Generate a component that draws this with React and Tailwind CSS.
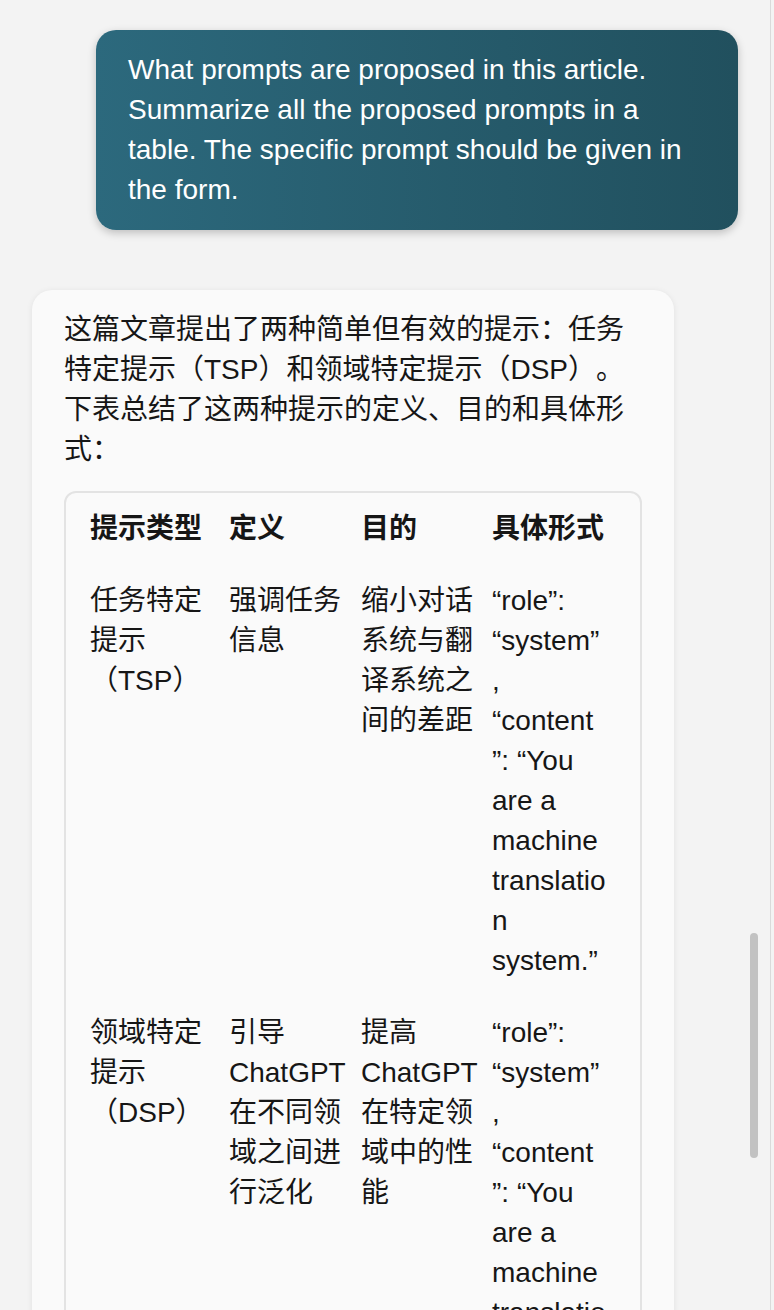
const rows = [
  {
    type: ["任务特定", "提示", "（TSP）"],
    def: ["强调任务", "信息"],
    goal: ["缩小对话", "系统与翻", "译系统之", "间的差距"],
    form: [
      "“role”:",
      "“system”",
      ",",
      "“content",
      "”: “You",
      "are a",
      "machine",
      "translatio",
      "n",
      "system.”",
    ],
  },
  {
    type: ["领域特定", "提示", "（DSP）"],
    def: ["引导", "ChatGPT", "在不同领", "域之间进", "行泛化"],
    goal: ["提高", "ChatGPT", "在特定领", "域中的性", "能"],
    form: [
      "“role”:",
      "“system”",
      ",",
      "“content",
      "”: “You",
      "are a",
      "machine",
      "translatio",
      "n",
      "system.”",
    ],
  },
];

function Lines({ lines }) {
  return lines.map((line, i) => (
    <div key={i} className="whitespace-nowrap">
      {line}
    </div>
  ));
}

export default function App() {
  return (
    <div className="relative h-[1310px] overflow-hidden bg-[#f3f3f3] font-['Liberation_Sans','Noto_Sans_CJK_SC',sans-serif] text-[28px] leading-[40px] [text-spacing-trim:space-all]">
      <div className="flex flex-col pt-[30px] pl-[32px] pr-[36px]">
        <div className="self-end w-[642px] rounded-[20px] bg-linear-to-r from-[#2c697d] to-[#21505e] px-8 py-5 text-white shadow-[0_3px_8px_rgba(0,0,0,0.22)]">
          What prompts are proposed in this article. Summarize all the proposed
          prompts in a table. The specific prompt should be given in the form.
        </div>

        <div className="mt-[60px] w-[642px] rounded-[20px] bg-[#fafafa] px-8 pt-5 pb-8 text-[#161616] shadow-[0_1px_6px_rgba(0,0,0,0.08)]">
          <p>
            这篇文章提出了两种简单但有效的提示：任务特定提示（TSP）和领域特定提示（DSP）。下表总结了这两种提示的定义、目的和具体形式：
          </p>

          <div className="mt-[21px] rounded-xl border-2 border-[#e3e3e3]">
            <table className="w-full table-fixed border-collapse text-left">
              <thead>
                <tr>
                  <th className="w-[139px] pl-6 py-4 align-top font-bold">
                    提示类型
                  </th>
                  <th className="w-[132px] pl-6 py-4 align-top font-bold">
                    定义
                  </th>
                  <th className="w-[131px] pl-6 py-4 align-top font-bold">
                    目的
                  </th>
                  <th className="pl-6 py-4 align-top font-bold">具体形式</th>
                </tr>
              </thead>
              <tbody>
                {rows.map((row, i) => (
                  <tr key={i}>
                    <td className="pl-6 py-4 align-top">
                      <Lines lines={row.type} />
                    </td>
                    <td className="pl-6 py-4 align-top">
                      <Lines lines={row.def} />
                    </td>
                    <td className="pl-6 py-4 align-top">
                      <Lines lines={row.goal} />
                    </td>
                    <td className="pl-6 py-4 align-top">
                      <Lines lines={row.form} />
                    </td>
                  </tr>
                ))}
              </tbody>
            </table>
          </div>
        </div>
      </div>

      {/* overlay scrollbar */}
      <div className="absolute left-[750px] top-[933px] h-[225px] w-[8px] rounded-full bg-[#c2c2c2]"></div>
      <div className="absolute right-[3px] top-0 h-full w-px bg-[#dadada]"></div>
    </div>
  );
}
